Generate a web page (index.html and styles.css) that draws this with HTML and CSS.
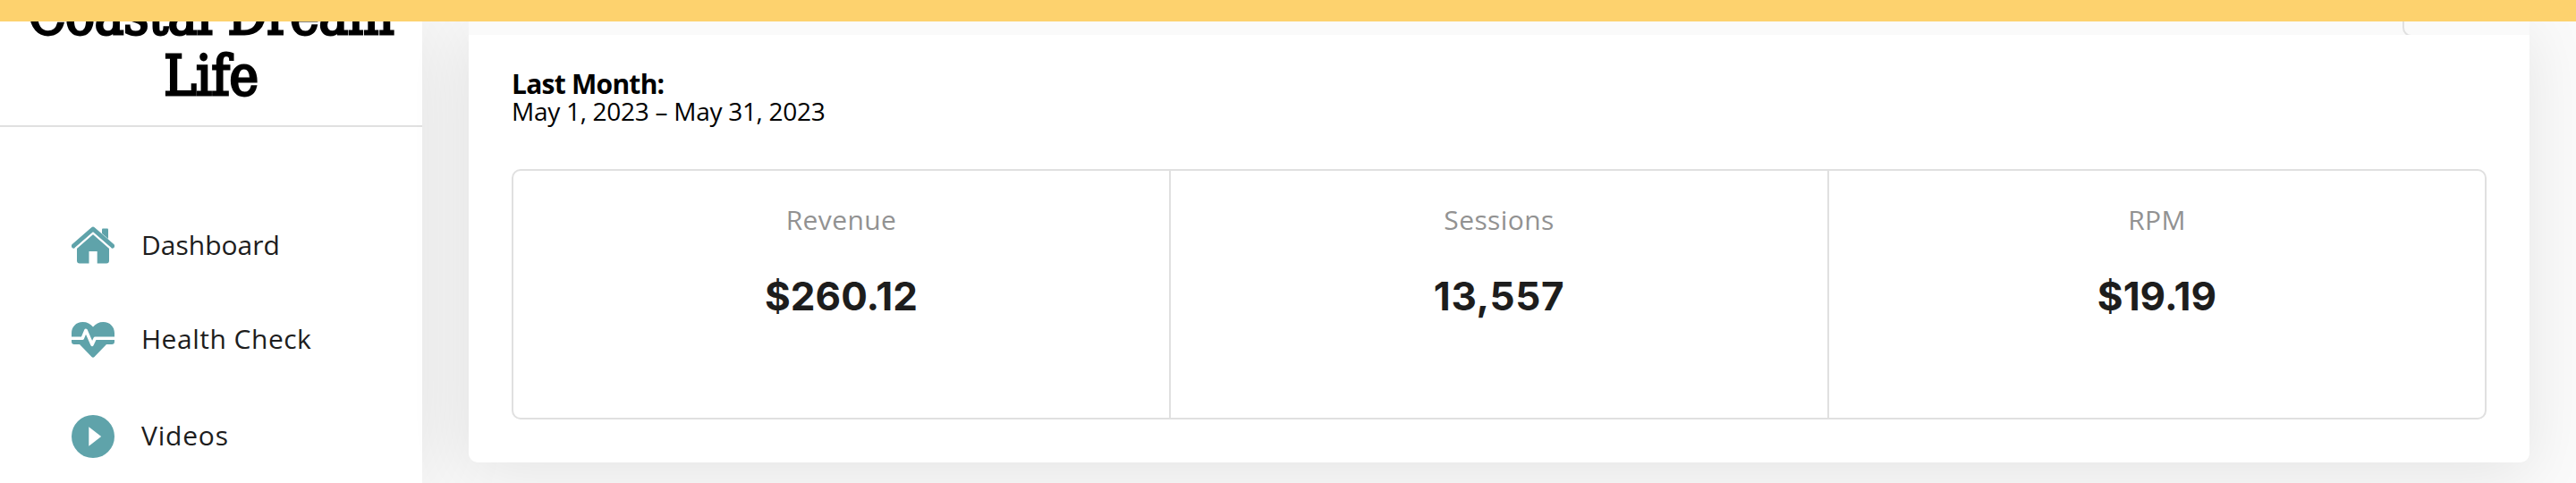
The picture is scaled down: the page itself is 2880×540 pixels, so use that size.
FILE: index.html
```
<!DOCTYPE html>
<html lang="en">
<head>
<meta charset="utf-8">
<title>Coastal Dream Life</title>
<link rel="stylesheet" href="styles.css">
</head>
<body>
<div class="banner"></div>
<div class="layout">
  <aside class="sidebar">
    <h1 class="brand"><span class="brand-text">Coastal Dream<br>Life</span></h1>
    <nav class="nav">
      <a class="nav-item">
        <svg class="icon" viewBox="0 0 48 48">
          <path d="M34 6.500q0-1 1-1h5q1 0 1 1V17l-7-6z"/>
          <path d="M2.500 25 24 6.300 45.500 25" fill="none" stroke="currentColor" stroke-width="5.200" stroke-linejoin="round" stroke-linecap="round"/>
          <path d="M24 11.300 42 27v14.500q0 3-3 3H28.700V31h-9.200v13.500H9q-3 0-3-3V27z"/>
          <path d="M4 28.200 24 10.600l20 17.600" fill="none" stroke="#fff" stroke-width="2.200"/>
        </svg>
        <span class="label label-dashboard">Dashboard</span>
      </a>
      <a class="nav-item">
        <svg class="icon" viewBox="0 0 48 48">
          <path d="M24 9.500C27 6 30.500 4 35.500 4 43 4 48 9.500 48 16.500V26q0 3-3 3h-6L25.500 43q-1.500 1.500-3 0L9 29H3q-3 0-3-3v-9.500C0 9.500 5 4 12.500 4 17.500 4 21 6 24 9.500z"/>
          <path d="M0 22.300h12.200l3.800-9 7 16 3.300-7H48" fill="none" stroke="#fff" stroke-width="3.600" stroke-linejoin="round"/>
        </svg>
        <span class="label label-health">Health Check</span>
      </a>
      <a class="nav-item nav-item-last">
        <svg class="icon" viewBox="0 0 48 48">
          <circle cx="24" cy="24" r="24"/>
          <path d="M19.300 13.300v21.400L33.200 24z" fill="#fff"/>
        </svg>
        <span class="label label-videos">Videos</span>
      </a>
    </nav>
  </aside>
  <main class="content">
    <section class="card">
      <header class="card-header"><div class="header-control"></div></header>
      <div class="card-body">
        <h2 class="period">Last Month:</h2>
        <p class="dates">May 1, 2023 – May 31, 2023</p>
        <div class="stats">
          <div class="stat"><span class="stat-name">Revenue</span><span class="stat-value">$260.12</span></div>
          <div class="stat"><span class="stat-name">Sessions</span><span class="stat-value stat-count">13,557</span></div>
          <div class="stat"><span class="stat-name">RPM</span><span class="stat-value">$19.19</span></div>
        </div>
      </div>
    </section>
  </main>
</div>
</body>
</html>
```
FILE: styles.css
```
* { box-sizing: border-box; }
body {
  margin: 0;
  height: 540px;
  overflow: hidden;
  background: #fafafa;
  color: #000;
  font-family: "Open Sans", sans-serif;
}
h1, h2, p { margin: 0; }
.banner { height: 24px; background: #fdd26e; }
.layout { display: flex; height: 516px; overflow: hidden; }
.sidebar {
  width: 472px;
  flex: none;
  background: #fff;
  box-shadow: 0 0 100px rgba(0, 0, 0, .105);
}
.brand {
  display: flex;
  align-items: flex-end;
  justify-content: center;
  height: 118px;
  padding-bottom: 21px;
  border-bottom: 2px solid #e0e0e0;
  overflow: hidden;
  font: 400 61px/68px "DejaVu Serif Condensed", "DejaVu Serif", serif;
  letter-spacing: -.3px;
  text-align: center;
  -webkit-text-stroke: 2.8px #000;
}
.brand-text { white-space: nowrap; }
.nav { padding-top: 79px; }
.nav-item {
  display: flex;
  align-items: center;
  gap: 30px;
  height: 106px;
  padding-left: 80px;
  color: #5fa3aa;
}
.nav-item-last { height: 110px; }
.icon { width: 48px; height: 48px; fill: currentColor; }
.label {
  padding-bottom: 2px;
  color: #1d1d1d;
  font-size: 30px;
  line-height: 40px;
}
.label-dashboard { padding-bottom: 0; }
.label-health { letter-spacing: .5px; }
.label-videos { letter-spacing: .8px; }
.content { flex: 1; padding: 0 52px; }
.card {
  height: 493px;
  background: #fff;
  border-radius: 0 0 10px 10px;
  box-shadow: 0 12px 70px rgba(0, 0, 0, .09);
}
.card-header {
  display: flex;
  justify-content: flex-end;
  height: 15px;
  background: #fafafa;
  overflow: hidden;
}
.header-control {
  width: 142px;
  height: 17px;
  border: solid #e0e0e0;
  border-width: 0 0 2px 2px;
  border-radius: 0 0 0 10px;
}
.card-body { padding: 40px 48px 48px; }
.period { font-size: 30px; line-height: 30px; font-weight: 700; letter-spacing: -.75px; }
.dates { font-size: 28px; line-height: 30px; letter-spacing: -.28px; }
.stats {
  display: grid;
  grid-template-columns: 733px 736px 1fr;
  height: 280px;
  margin-top: 50px;
  border: 2px solid #e0e0e0;
  border-radius: 10px;
}
.stat {
  display: flex;
  flex-direction: column;
  align-items: center;
  gap: 40px;
  padding-top: 37px;
}
.stat + .stat { border-left: 2px solid #e0e0e0; }
.stat-name { color: #929292; font-size: 30px; line-height: 36px; letter-spacing: .4px; }
.stat-value { color: #1d1d1d; font: 700 44px/54px Inter, sans-serif; }
.stat-count { letter-spacing: .6px; }
```
